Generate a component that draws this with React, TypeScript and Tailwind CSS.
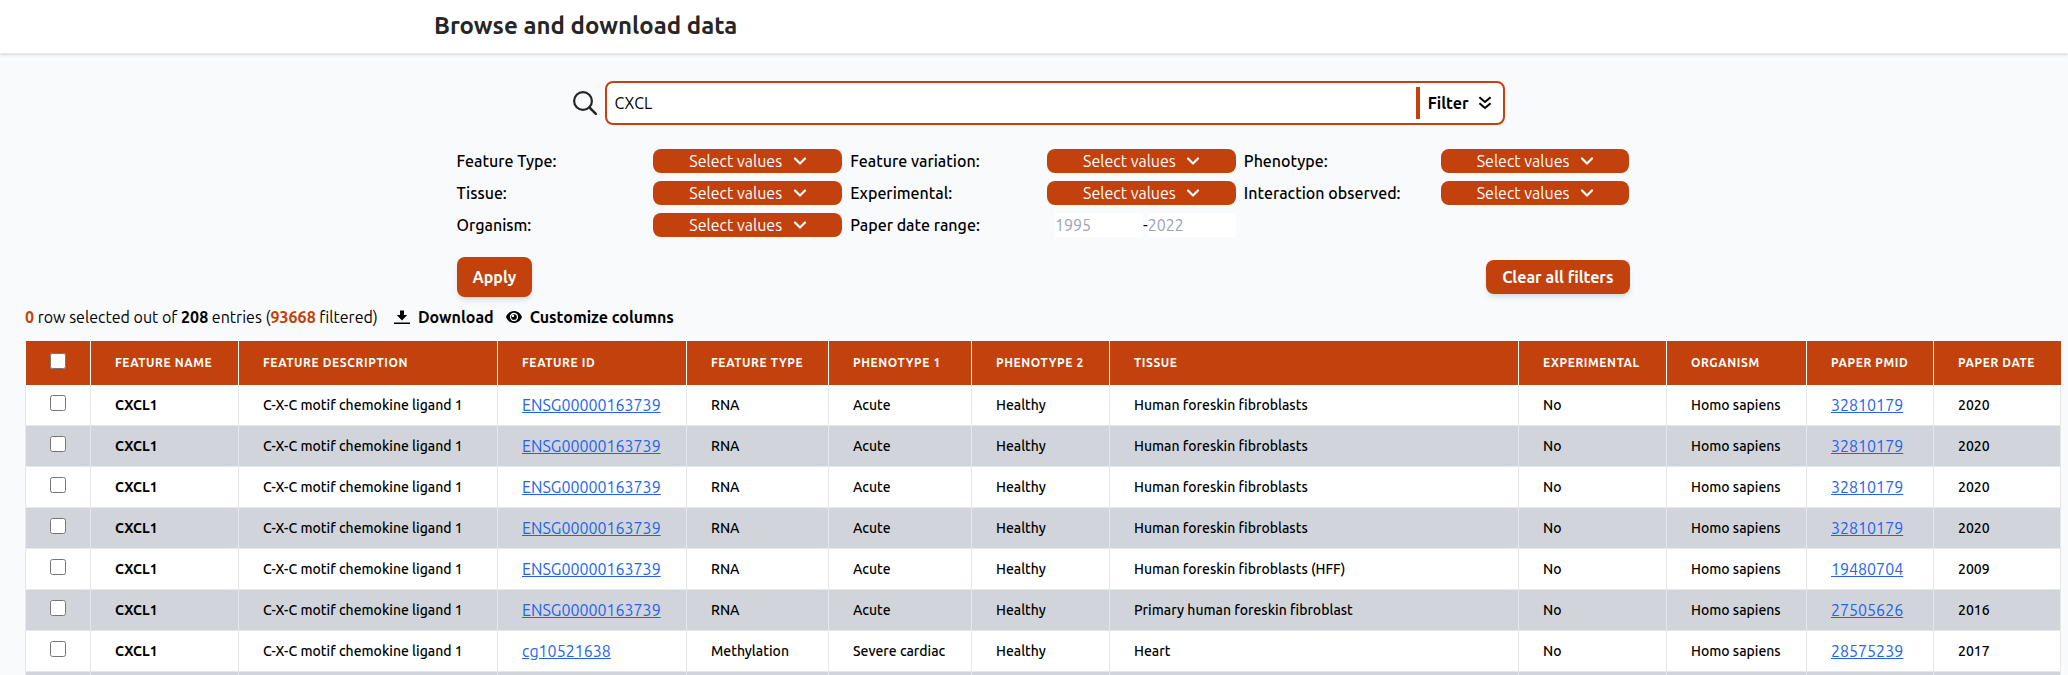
import type { ReactNode } from "react";
import { FiChevronDown } from "react-icons/fi";

const columns = [
  { title: "Feature name", width: "w-[148px]" },
  { title: "Feature description", width: "w-[259px]" },
  { title: "Feature ID", width: "w-[189px]" },
  { title: "Feature type", width: "w-[142px]" },
  { title: "Phenotype 1", width: "w-[143px]" },
  { title: "Phenotype 2", width: "w-[138px]" },
  { title: "Tissue", width: "w-auto" },
  { title: "Experimental", width: "w-[148px]" },
  { title: "Organism", width: "w-[140px]" },
  { title: "Paper PMID", width: "w-[127px]" },
  { title: "Paper date", width: "w-[127px]" },
];

type Row = {
  id: string;
  type: string;
  phenotype: string;
  tissue: string;
  pmid: string;
  year: string;
};

const ensg = { id: "ENSG00000163739", type: "RNA", phenotype: "Acute" };
const fibroblasts = { ...ensg, tissue: "Human foreskin fibroblasts", pmid: "32810179", year: "2020" };

const rows: Row[] = [
  fibroblasts,
  fibroblasts,
  fibroblasts,
  fibroblasts,
  { ...ensg, tissue: "Human foreskin fibroblasts (HFF)", pmid: "19480704", year: "2009" },
  { ...ensg, tissue: "Primary human foreskin fibroblast", pmid: "27505626", year: "2016" },
  { id: "cg10521638", type: "Methylation", phenotype: "Severe cardiac", tissue: "Heart", pmid: "28575239", year: "2017" },
];

function FilterSelect({ id, label }: { id: string; label: string }) {
  return (
    <>
      <label htmlFor={id} className="whitespace-nowrap font-medium">
        {label}
      </label>
      <div className="relative">
        <select
          id={id}
          className="block h-6 w-full appearance-none rounded-lg bg-[#c2410c] pr-6 text-center leading-6 text-white"
        >
          <option>Select values</option>
        </select>
        <FiChevronDown
          strokeWidth={2.6}
          className="pointer-events-none absolute left-[calc(50%+42px)] top-0.5 size-5 text-white"
        />
      </div>
    </>
  );
}

function Cell({ children }: { children?: ReactNode }) {
  return <td className="border-x border-b border-[#e5e7eb] px-6 whitespace-nowrap">{children}</td>;
}

function CellLink({ children }: { children: ReactNode }) {
  return (
    <a href="#" className="text-base font-normal text-[#2563eb] underline">
      {children}
    </a>
  );
}

export default function App() {
  return (
    <div className="h-screen overflow-hidden bg-[#f9fafb] font-['Ubuntu','Noto_Sans',sans-serif] text-base leading-6 text-black">
      <header className="border-b border-[#e5e7eb] bg-white shadow-sm">
        <div className="mx-auto max-w-[1280px] px-10 pt-[10px] pb-[11px]">
          <h1 className="text-2xl leading-8 font-bold text-[#262626]">Browse and download data</h1>
        </div>
      </header>

      <main className="pt-[27px] pr-[7px] pl-[25px]">
        <form className="mx-auto w-full max-w-[1173px]">
          <div className="ml-[116px] flex items-center gap-2">
            <svg viewBox="0 0 24 24" className="size-6 text-[#262626]" fill="none" stroke="currentColor" strokeWidth="2.2">
              <circle cx="10" cy="10" r="8.9" />
              <path d="M16.4 16.4l6.4 6.4" strokeWidth="2.6" strokeLinecap="round" />
            </svg>
            <div className="flex h-11 max-w-[900px] flex-1 items-center rounded-lg border-2 border-[#c2410c] bg-white">
              <input
                aria-label="Search"
                defaultValue="CXCL"
                className="min-w-0 flex-1 bg-transparent px-2 outline-none"
              />
              <button type="button" className="flex h-8 items-center gap-2 border-l-4 border-[#c2410c] pr-[10px] pl-2 font-bold">
                Filter
                <svg viewBox="0 0 16 16" className="size-4" fill="none" stroke="currentColor" strokeWidth="2">
                  <path d="M2.4 2.2L8 7l5.600-4.800M2.400 8.200L8 13l5.600-4.800" />
                </svg>
              </button>
            </div>
          </div>

          <div className="mt-6 grid grid-cols-6 gap-2">
            <FilterSelect id="feature-type" label="Feature Type:" />
            <FilterSelect id="variation" label="Feature variation:" />
            <FilterSelect id="phenotype" label="Phenotype:" />
            <FilterSelect id="tissue" label="Tissue:" />
            <FilterSelect id="experimental" label="Experimental:" />
            <FilterSelect id="interaction" label="Interaction observed:" />
            <FilterSelect id="organism" label="Organism:" />
            <label htmlFor="year-from" className="font-medium">
              Paper date range:
            </label>
            <div className="flex pl-2">
              <input
                id="year-from"
                placeholder="1995"
                className="h-6 w-0 flex-1 bg-white placeholder:text-[#9ca3af]"
              />
              <span>-</span>
              <input
                aria-label="Paper date range end"
                placeholder="2022"
                className="h-6 w-0 flex-1 bg-white placeholder:text-[#9ca3af]"
              />
            </div>
          </div>

          <div className="mt-5 flex items-center justify-between">
            <button type="button" className="h-10 rounded-lg bg-[#c2410c] px-4 font-bold text-white shadow-md">
              Apply
            </button>
            <button type="button" className="h-[34px] rounded-lg bg-[#c2410c] px-4 font-bold text-white shadow-md">
              Clear all filters
            </button>
          </div>
        </form>

        <div className="mt-2 flex items-center gap-3">
          <p className="pr-1">
            <b className="text-[#c2410c]">0</b> row selected out of <b>208</b> entries (
            <b className="text-[#c2410c]">93668</b> filtered)
          </p>
          <button type="button" className="flex items-center gap-2 font-bold">
            <svg viewBox="0 0 16 16" className="size-4" fill="currentColor">
              <path d="M6 1.500h4v4.500h3.200L8 11.500 2.800 6H6zM0 13.400h16V15H0z" />
            </svg>
            Download
          </button>
          <button type="button" className="flex items-center gap-2 font-bold">
            <svg viewBox="0 0 16 16" className="size-4" fill="none">
              <path d="M0 8C1.500 4.300 4.400 2 8 2s6.500 2.300 8 6c-1.500 3.700-4.400 6-8 6S1.500 11.700 0 8z" fill="currentColor" />
              <circle cx="8" cy="8" r="3.500" stroke="white" strokeWidth="1.3" />
              <circle cx="6.900" cy="6.900" r="1.200" fill="white" />
            </svg>
            Customize columns
          </button>
        </div>

        <table className="mt-3 w-full table-fixed border-collapse bg-white text-left text-sm">
          <thead>
            <tr className="h-11 bg-[#c2410c] text-xs tracking-wider text-white uppercase">
              <th className="w-[65px] border-r border-white pl-6">
                <input type="checkbox" aria-label="Select all rows" className="mb-1 block size-4" />
              </th>
              {columns.map((c) => (
                <th key={c.title} className={`${c.width} border-r border-white px-6 font-bold whitespace-nowrap last:border-[#c2410c]`}>
                  {c.title}
                </th>
              ))}
            </tr>
          </thead>
          <tbody>
            {rows.map((r, i) => (
              <tr key={i} className="h-[41px] font-medium first:h-10 even:bg-[#d1d5db]">
                <td className="border-x border-b border-[#e5e7eb] pl-6">
                  <input type="checkbox" aria-label={`Select row ${i + 1}`} className="mb-1 block size-4" />
                </td>
                <Cell><span className="font-bold">CXCL1</span></Cell>
                <Cell>C-X-C motif chemokine ligand 1</Cell>
                <Cell><CellLink>{r.id}</CellLink></Cell>
                <Cell>{r.type}</Cell>
                <Cell>{r.phenotype}</Cell>
                <Cell>Healthy</Cell>
                <Cell>{r.tissue}</Cell>
                <Cell>No</Cell>
                <Cell>Homo sapiens</Cell>
                <Cell><CellLink>{r.pmid}</CellLink></Cell>
                <Cell>{r.year}</Cell>
              </tr>
            ))}
            <tr className="h-[41px] even:bg-[#d1d5db]">
              <Cell />
              {columns.map((c) => (
                <Cell key={c.title} />
              ))}
            </tr>
          </tbody>
        </table>
      </main>
    </div>
  );
}
